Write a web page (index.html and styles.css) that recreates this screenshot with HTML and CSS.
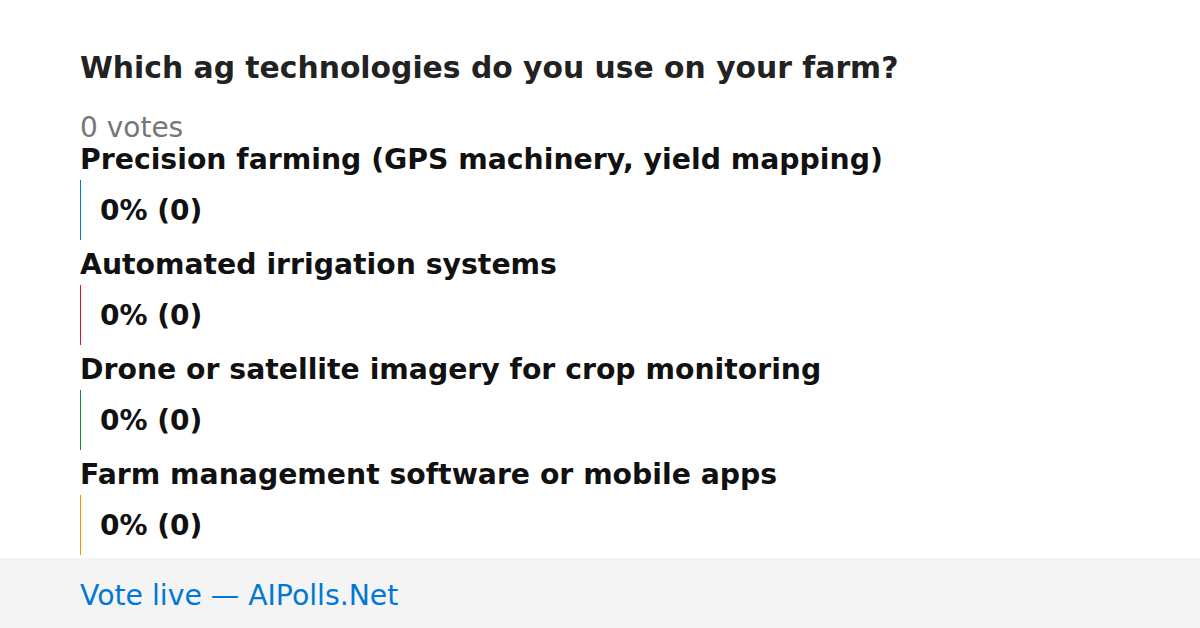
FILE: index.html
```html
<!DOCTYPE html>
<html lang="en">
<head>
  <meta charset="UTF-8" />
  <title>Poll</title>
  <link rel="stylesheet" href="styles.css">
</head>
<body>
  <div class="poll">
    <h1>Which ag technologies do you use on your farm?</h1>
    <div class="total">0 votes</div>

    <div class="option">
      <div class="label">Precision farming (GPS machinery, yield mapping)</div>
      <div class="bar blue">0% (0)</div>
    </div>
    <div class="option">
      <div class="label">Automated irrigation systems</div>
      <div class="bar red">0% (0)</div>
    </div>
    <div class="option">
      <div class="label">Drone or satellite imagery for crop monitoring</div>
      <div class="bar green">0% (0)</div>
    </div>
    <div class="option">
      <div class="label">Farm management software or mobile apps</div>
      <div class="bar orange">0% (0)</div>
    </div>
  </div>

  <div class="footer">Vote live — AIPolls.Net</div>
</body>
</html>
```

FILE: styles.css
```css
body {
  margin: 0;
  font-family: 'DejaVu Sans', sans-serif;
  background: #ffffff;
  color: #111111;
  width: 1200px;
  height: 628px;
  overflow: hidden;
  display: flex;
  flex-direction: column;
}

.poll {
  flex: 1;
  min-height: 0;
  overflow: hidden;
  padding: 50px 80px 0;
}

h1 {
  margin: 0;
  font-size: 29.8px;
  line-height: 36px;
  color: #222222;
}

.total {
  margin-top: 26px;
  font-size: 28px;
  line-height: 32px;
  color: #777777;
}

.option {
  margin-bottom: 9px;
}

.label {
  margin-bottom: 4px;
  font-size: 28.3px;
  font-weight: bold;
  line-height: 32px;
}

.bar {
  box-sizing: border-box;
  height: 60px;
  border-left: 1px solid;
  padding-left: 19px;
  display: flex;
  align-items: center;
  font-size: 28px;
  font-weight: bold;
  color: #111111;
}

.blue { border-color: #0078d4; }
.red { border-color: #e81123; }
.green { border-color: #10893e; }
.orange { border-color: #ff8c00; }

.footer {
  flex: none;
  box-sizing: border-box;
  height: 70px;
  background: #f4f4f4;
  padding: 4px 0 0 80px;
  display: flex;
  align-items: center;
  font-size: 28.3px;
  color: #0078d4;
}
```
